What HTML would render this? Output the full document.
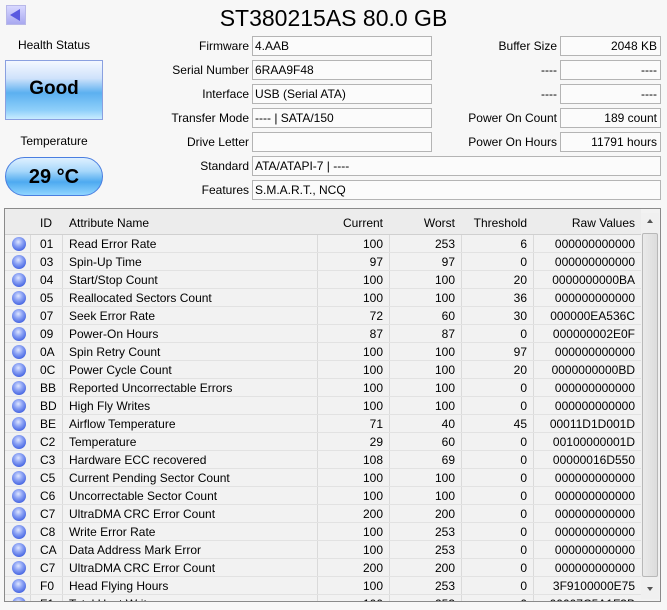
<!DOCTYPE html>
<html><head><meta charset="utf-8"><style>
*{margin:0;padding:0;box-sizing:border-box}
body{width:667px;height:610px;overflow:hidden;background:#f7f7f7;font-family:"Liberation Sans",sans-serif;font-size:12px;color:#000;position:relative}
.a{position:absolute;white-space:nowrap}
.lbl{text-align:right;line-height:20px}
.f{position:absolute;border:1px solid #b4b4b4;background:#fbfbfb;height:20px;line-height:18px;padding:0 2px;white-space:nowrap}
.r{text-align:right;padding-right:3px}
#tbl{position:absolute;left:4px;top:208px;width:657px;height:394px;border:1px solid #8a8a8a;background:#f2f2f2;overflow:hidden}
.row{position:absolute;left:0;width:636px;height:18px;line-height:18px;border-bottom:1px solid #e2e2e2}
.row span{position:absolute;top:0}
.dot{width:14px;height:14px;border-radius:50%;top:2px!important;left:7px;background:radial-gradient(circle at 45% 35%,#dfe6ff 0,#8ea4f5 35%,#3f5fe0 80%,#2c46b8 100%)}
.sep{position:absolute;top:0;width:1px;height:394px;background:#dadada}
</style></head><body>
<div class="a" style="left:6px;top:5px;width:20px;height:20px;background:linear-gradient(#d8d8ff,#a8a8f0);border:1px solid #b8b8e8"></div>
<div class="a" style="left:10px;top:9px;width:0;height:0;border-top:6px solid transparent;border-bottom:6px solid transparent;border-right:10px solid #5a5ae0"></div>
<div class="a" style="left:0;width:667px;top:4px;text-align:center;font-size:23px;line-height:28px">ST380215AS 80.0 GB</div>
<div class="a" style="left:5px;width:98px;top:38px;text-align:center">Health Status</div>
<div class="a" style="left:5px;top:60px;width:98px;height:60px;border:1px solid #8aa0e0;background:linear-gradient(#f4f8ff 0%,#cfe2fb 30%,#5cb0f0 55%,#8fd0fa 85%,#c8ecff 100%);text-align:center;line-height:56px;font-weight:bold;font-size:19px">Good</div>
<div class="a" style="left:5px;width:98px;top:134px;text-align:center">Temperature</div>
<div class="a" style="left:5px;top:157px;width:98px;height:39px;border:1px solid #4a7ee0;border-radius:20px;background:linear-gradient(#dff0ff 0%,#a8d8fb 35%,#4eaaf0 65%,#8fd5ff 100%);text-align:center;line-height:38px;font-weight:bold;font-size:20px">29 °C</div>

<div class="a lbl" style="right:418px;top:36px">Firmware</div>
<div class="a lbl" style="right:418px;top:60px">Serial Number</div>
<div class="a lbl" style="right:418px;top:84px">Interface</div>
<div class="a lbl" style="right:418px;top:108px">Transfer Mode</div>
<div class="a lbl" style="right:418px;top:132px">Drive Letter</div>
<div class="a lbl" style="right:418px;top:156px">Standard</div>
<div class="a lbl" style="right:418px;top:180px">Features</div>
<div class="f" style="left:252px;top:36px;width:180px">4.AAB</div>
<div class="f" style="left:252px;top:60px;width:180px">6RAA9F48</div>
<div class="f" style="left:252px;top:84px;width:180px">USB (Serial ATA)</div>
<div class="f" style="left:252px;top:108px;width:180px">---- | SATA/150</div>
<div class="f" style="left:252px;top:132px;width:180px"></div>
<div class="f" style="left:252px;top:156px;width:409px">ATA/ATAPI-7 | ----</div>
<div class="f" style="left:252px;top:180px;width:409px">S.M.A.R.T., NCQ</div>
<div class="a lbl" style="right:110px;top:36px">Buffer Size</div>
<div class="a lbl" style="right:110px;top:60px">----</div>
<div class="a lbl" style="right:110px;top:84px">----</div>
<div class="a lbl" style="right:110px;top:108px">Power On Count</div>
<div class="a lbl" style="right:110px;top:132px">Power On Hours</div>
<div class="f r" style="left:560px;top:36px;width:101px">2048 KB</div>
<div class="f r" style="left:560px;top:60px;width:101px">----</div>
<div class="f r" style="left:560px;top:84px;width:101px">----</div>
<div class="f r" style="left:560px;top:108px;width:101px">189 count</div>
<div class="f r" style="left:560px;top:132px;width:101px">11791 hours</div>

<div id="tbl">
<div class="sep" style="left:25px"></div><div class="sep" style="left:57px"></div><div class="sep" style="left:312px"></div><div class="sep" style="left:384px"></div><div class="sep" style="left:456px"></div><div class="sep" style="left:528px"></div>
<div class="row" style="top:0;height:26px;line-height:28px;background:#ececec;border-bottom:1px solid #d0d0d0">
<span style="left:35px">ID</span><span style="left:64px">Attribute Name</span><span style="right:258px">Current</span><span style="right:186px">Worst</span><span style="right:114px">Threshold</span><span style="right:6px">Raw Values</span></div>
<div id="rows"></div>
<div style="position:absolute;left:636px;top:4px;width:18px;height:386px;background:#f0f0f0">
<div style="position:absolute;left:1px;top:20px;width:16px;height:344px;border:1px solid #b8b8b8;border-radius:2px;background:linear-gradient(90deg,#eaeaea,#dcdcdc)"></div>
<div style="position:absolute;left:6px;top:6px;border-left:3px solid transparent;border-right:3px solid transparent;border-bottom:4px solid #555"></div>
<div style="position:absolute;left:6px;top:374px;border-left:3px solid transparent;border-right:3px solid transparent;border-top:4px solid #555"></div>
</div>
</div>
<script>
var d=[["01","Read Error Rate",100,253,6,"000000000000"],["03","Spin-Up Time",97,97,0,"000000000000"],["04","Start/Stop Count",100,100,20,"0000000000BA"],["05","Reallocated Sectors Count",100,100,36,"000000000000"],["07","Seek Error Rate",72,60,30,"000000EA536C"],["09","Power-On Hours",87,87,0,"000000002E0F"],["0A","Spin Retry Count",100,100,97,"000000000000"],["0C","Power Cycle Count",100,100,20,"0000000000BD"],["BB","Reported Uncorrectable Errors",100,100,0,"000000000000"],["BD","High Fly Writes",100,100,0,"000000000000"],["BE","Airflow Temperature",71,40,45,"00011D1D001D"],["C2","Temperature",29,60,0,"00100000001D"],["C3","Hardware ECC recovered",108,69,0,"00000016D550"],["C5","Current Pending Sector Count",100,100,0,"000000000000"],["C6","Uncorrectable Sector Count",100,100,0,"000000000000"],["C7","UltraDMA CRC Error Count",200,200,0,"000000000000"],["C8","Write Error Rate",100,253,0,"000000000000"],["CA","Data Address Mark Error",100,253,0,"000000000000"],["C7","UltraDMA CRC Error Count",200,200,0,"000000000000"],["F0","Head Flying Hours",100,253,0,"3F9100000E75"],["F1","Total Host Writes",100,253,0,"00007C5A1F3B"]];
var h="";d.forEach(function(r,i){h+='<div class="row" style="top:'+(26+18*i)+'px"><span class="dot"></span><span style="left:35px">'+r[0]+'</span><span style="left:64px">'+r[1]+'</span><span style="right:258px">'+r[2]+'</span><span style="right:186px">'+r[3]+'</span><span style="right:114px">'+r[4]+'</span><span style="right:6px">'+r[5]+'</span></div>';});
document.getElementById("rows").innerHTML=h;
</script>
</body></html>
